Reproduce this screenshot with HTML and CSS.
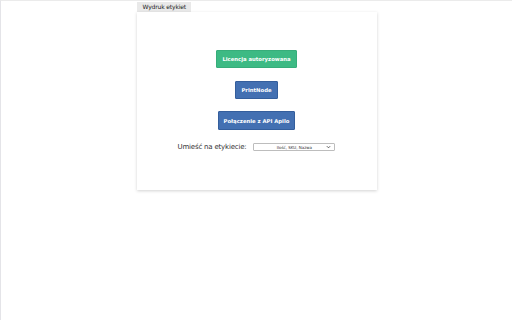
FILE: index.html
```html
<!DOCTYPE html>
<html lang="pl">
<head>
<meta charset="utf-8">
<title>Wydruk etykiet</title>
<link rel="stylesheet" href="styles.css">
</head>
<body>
<div class="frame">
  <div class="panel">
    <div class="tab">Wydruk etykiet</div>
    <div class="card">
      <button class="btn btn-green">Licencja autoryzowana</button>
      <button class="btn btn-blue">PrintNode</button>
      <button class="btn btn-blue">Połączenie z API Apilo</button>
      <div class="row">
        <label class="label">Umieść na etykiecie:</label>
        <div class="select"><span class="select-text">Ilość, SKU, Nazwa</span><svg class="chev" viewBox="0 0 6 4" width="5" height="4"><path d="M1 1 L3 3 L5 1" fill="none" stroke="#333" stroke-width="0.9"/></svg></div>
      </div>
    </div>
  </div>
</div>
</body>
</html>
```
FILE: styles.css
```css
html, body {
  margin: 0;
  padding: 0;
  background: #ffffff;
  font-family: "DejaVu Sans", Verdana, sans-serif;
}
.frame {
  box-sizing: border-box;
  width: 512px;
  height: 320px;
  border-top: 1px solid #ebebeb;
  border-left: 1px solid #e4e4e8;
}
.panel {
  width: 240px;
  margin: 0 auto;
  padding-top: 1px;
  display: flex;
  flex-direction: column;
  align-items: flex-start;
}
.tab {
  background: #e9e9e9;
  font-size: 6px;
  letter-spacing: -0.15px;
  color: #222;
  height: 10px;
  line-height: 10px;
  padding: 0 5px 0 6px;
}
.card {
  align-self: stretch;
  height: 178px;
  background: #fff;
  box-shadow: 0 1px 3px rgba(0,0,0,0.18);
  display: flex;
  flex-direction: column;
  align-items: center;
  padding-top: 38px;
  box-sizing: border-box;
}
.btn {
  font-family: "DejaVu Sans", Verdana, sans-serif;
  font-size: 5.3px;
  font-weight: bold;
  color: #fff;
  border-radius: 1px;
  padding: 0 5px;
  height: 18px;
  cursor: pointer;
}
.btn-green {
  background: #3dba84;
  border: 1px solid #37ad7a;
  margin-bottom: 13px;
}
.btn-blue {
  background: #4370b2;
  border: 1px solid #345e9c;
  margin-bottom: 12px;
}
.btn-blue + .btn-blue {
  height: 19px;
}
.row {
  display: flex;
  align-items: center;
  gap: 7px;
  margin-top: 1px;
}
.label {
  font-size: 7px;
  font-weight: normal;
  letter-spacing: -0.2px;
  color: #333;
}
.select {
  box-sizing: border-box;
  width: 82px;
  height: 8px;
  border: 1px solid #bdbdbd;
  border-radius: 1px;
  display: flex;
  align-items: center;
  justify-content: center;
  position: relative;
  background: #fff;
}
.select-text {
  font-size: 4px;
  color: #333;
}
.chev {
  position: absolute;
  right: 3px;
  top: 1px;
}
```
